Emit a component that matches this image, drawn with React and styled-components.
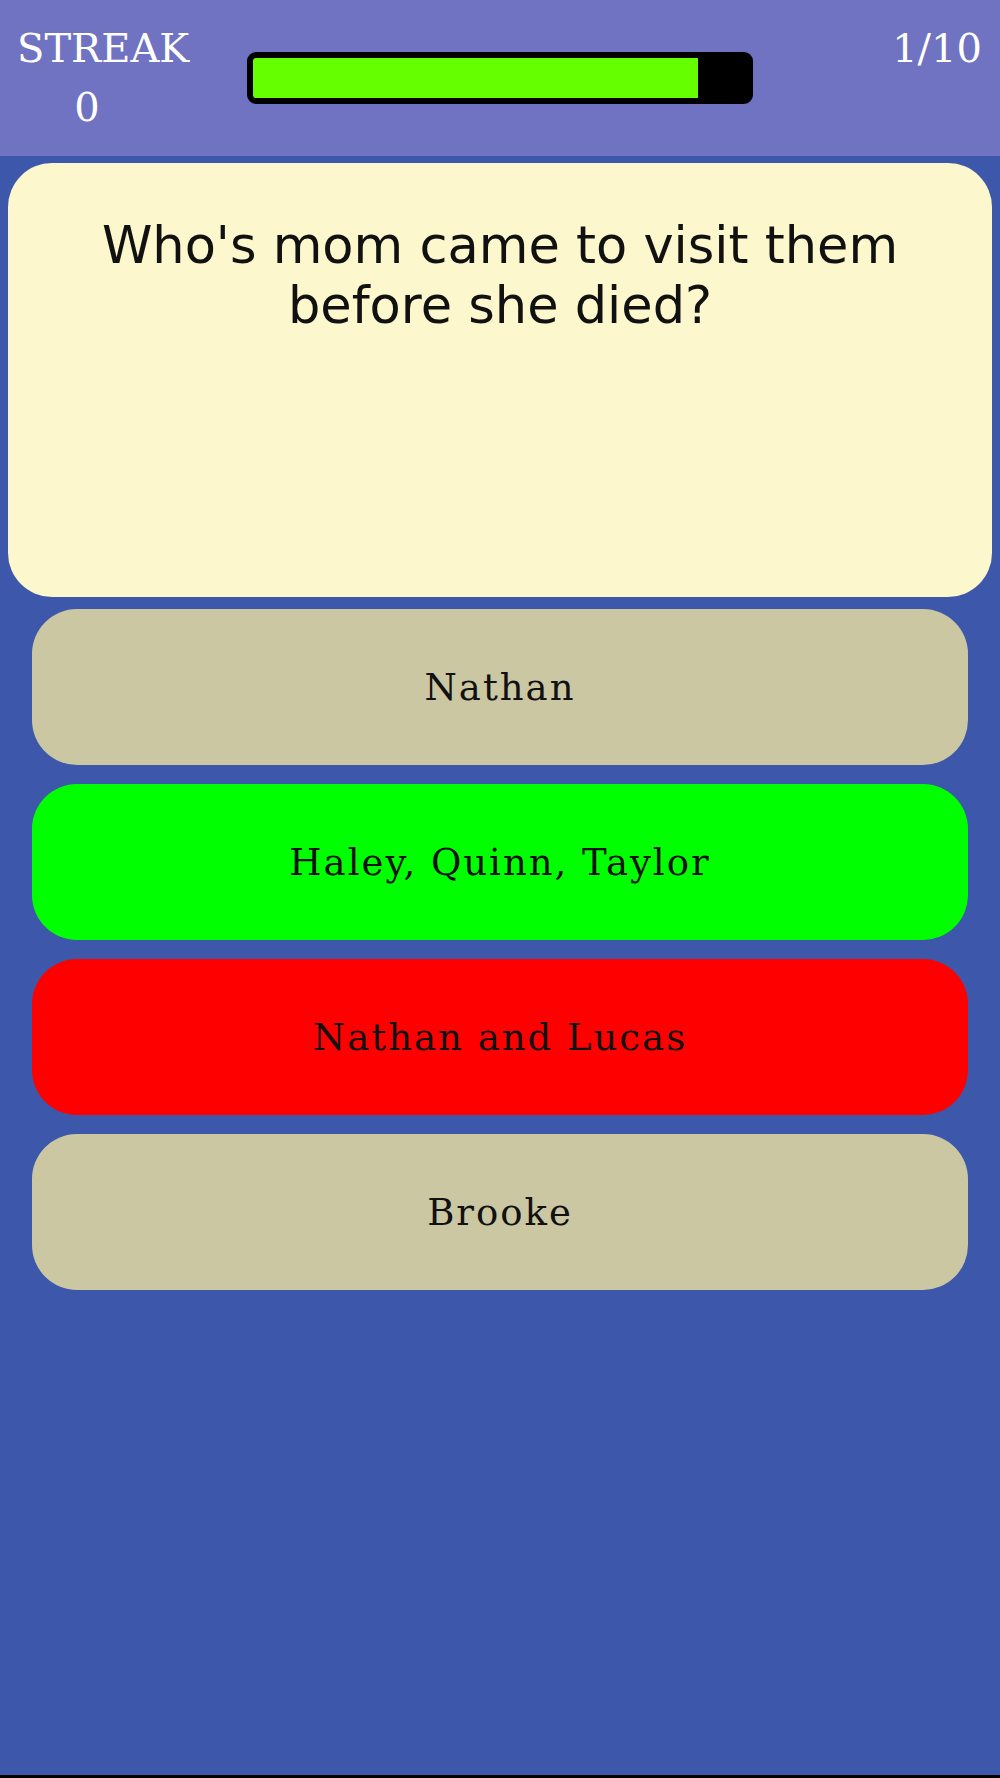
import React from 'react'
import styled, { createGlobalStyle } from 'styled-components'

const GlobalStyle = createGlobalStyle`
    html, body {
        margin: 0;
        padding: 0;
        background: #000;
    }
    * {
        box-sizing: border-box;
    }
`

const answers = [
    { text: 'Nathan', state: 'idle' },
    { text: 'Haley, Quinn, Taylor', state: 'right' },
    { text: 'Nathan and Lucas', state: 'wrong' },
    { text: 'Brooke', state: 'idle' },
]

const App = () => {
    const progress = 90

    return (
        <Screen>
            <GlobalStyle />
            <TopBar>
                <Streak>
                    <span>STREAK</span>
                    <span>0</span>
                </Streak>
                <Timer>
                    <TimerFill style={{ width: `${progress}%` }} />
                </Timer>
                <Counter>1/10</Counter>
            </TopBar>
            <Body>
                <QuestionCard>
                    <Question>Who's mom came to visit them before she died?</Question>
                </QuestionCard>
                <Answers>
                    {answers.map((a) => (
                        <Answer key={a.text} state={a.state}>{a.text}</Answer>
                    ))}
                </Answers>
            </Body>
        </Screen>
    )
}

export default App

const Screen = styled.div`
    height: 1775px;
    background: #3d58ab;
    display: flex;
    flex-direction: column;
`

const TopBar = styled.header`
    height: 156px;
    background: #7072c2;
    position: relative;
    display: flex;
    align-items: center;
    justify-content: center;
    color: #fff;
    font-family: "DejaVu Serif", serif;
`

const Streak = styled.div`
    position: absolute;
    top: 19px;
    left: 17px;
    width: 140px;
    display: flex;
    flex-direction: column;
    align-items: center;
    font-size: 40px;
    line-height: 59px;
    white-space: nowrap;

    span:first-child {
        align-self: flex-start;
    }
`

const Counter = styled.div`
    position: absolute;
    top: 19px;
    right: 18px;
    font-size: 40px;
    line-height: 59px;
`

const Timer = styled.div`
    width: 506px;
    height: 52px;
    border: 6px solid #000;
    border-radius: 9px;
    background: #000;
    overflow: hidden;
`

const TimerFill = styled.div`
    height: 100%;
    background: #66ff00;
`

const Body = styled.main`
    padding: 7px 8px 0;
    display: flex;
    flex-direction: column;
    gap: 12px;
`

const QuestionCard = styled.section`
    height: 434px;
    background: #fcf7cd;
    border-radius: 44px;
    padding: 53px 60px 0;
`

const Question = styled.p`
    margin: 0;
    text-align: center;
    font-family: "DejaVu Sans", sans-serif;
    font-size: 51px;
    line-height: 60px;
    color: #111;
`

const answerColors = {
    idle: '#cbc7a2',
    right: '#00ff00',
    wrong: '#ff0000',
}

const Answers = styled.div`
    padding: 0 24px;
    display: flex;
    flex-direction: column;
    gap: 19px;
`

const Answer = styled.button`
    height: 156px;
    border: none;
    border-radius: 45px;
    background: ${({ state }) => answerColors[state]};
    font-family: "DejaVu Serif", serif;
    font-size: 37px;
    letter-spacing: 2px;
    color: #111;
    cursor: pointer;
`
